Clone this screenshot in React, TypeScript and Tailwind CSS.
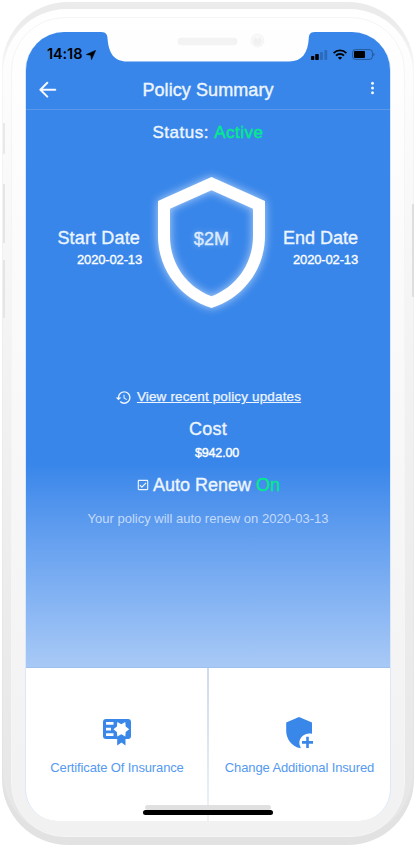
import { MdHistory, MdOutlineCheckBox } from "react-icons/md";

function StatusBar() {
    return (
        <div className="flex h-[42px] items-center justify-between pl-[21px] pr-[15px] pt-[3px] text-black">
            <div className="flex items-center gap-[3px]">
                <span className="w-[36px] whitespace-nowrap font-[Inter,sans-serif] text-[14.5px] font-semibold leading-none tracking-[-0.1px]">14:18</span>
                <svg width="10" height="10" viewBox="0 0 10 10" fill="currentColor" stroke="currentColor" strokeWidth="0.600" strokeLinejoin="round">
                    <path d="M9.600 0.400 5.500 9.600 4.800 5.200 0.400 4.500Z" />
                </svg>
            </div>
            <div className="flex items-center gap-[5px]">
                <svg width="17" height="10" viewBox="0 0 17 10" fill="currentColor">
                    <rect x="0" y="6" width="3.3" height="4" rx="0.8" />
                    <rect x="4.2" y="4" width="3.6" height="6" rx="0.8" />
                    <rect x="9" y="2" width="3" height="8" rx="0.8" opacity="0.2" />
                    <rect x="13.3" y="0" width="3" height="10" rx="0.8" opacity="0.2" />
                </svg>
                <svg width="14" height="11" viewBox="0 0 14 11" fill="none" stroke="currentColor" strokeWidth="1.8">
                    <path d="M0.6 4.1a9 9 0 0 1 12.8 0M3 6.7a5.6 5.6 0 0 1 8 0" />
                    <path d="M7 10.8 4.9 8.7a3 3 0 0 1 4.2 0Z" fill="currentColor" stroke="none" />
                </svg>
                <svg width="23" height="11" viewBox="0 0 23 11" fill="none">
                    <rect x="0.6" y="0.6" width="19.8" height="9.8" rx="2.8" stroke="currentColor" opacity="0.35" />
                    <rect x="2" y="2" width="11" height="7" rx="1" fill="currentColor" />
                    <path d="M21.5 3.8v3.4c1.2-.5 1.2-2.9 0-3.4Z" fill="currentColor" opacity="0.45" />
                </svg>
            </div>
        </div>
    )
}

function Notch() {
    return (
        <svg className="absolute left-[76px] top-[-2px]" width="212" height="33" viewBox="0 0 212 33">
            <path d="M0 0H212V2.2C208.5 2.2 207 4 206.800 8C206 23 200 31.500 187 31.500H25C12 31.500 6.500 23 5.500 8C5.200 4 3.500 2.200 0 2.200Z" fill="#fefefe" />
            <rect x="75.500" y="7.800" width="60" height="7.400" rx="3.700" fill="#f3f3f3" />
            <circle cx="155.500" cy="10.500" r="6.300" fill="#fafafa" stroke="#f3f3f3" />
            <circle cx="155.500" cy="11" r="4.500" fill="#f1f1f1" />
            <path d="M153 6.500h5l-2.500 3Z" fill="#fafafa" />
        </svg>
    )
}

function Header() {
    return (
        <header className="relative flex h-[36px] items-center justify-center border-b border-[#5b98e9] pb-[4px]">
            <svg className="absolute left-[12.500px] top-[7px]" width="18" height="18" viewBox="0 0 18 18" fill="none" stroke="#f5f9ff" strokeWidth="2" strokeLinecap="round" strokeLinejoin="round">
                <path d="M16.300 8.700H1.600M8.300 1.800 1.400 8.700l6.900 6.900" />
            </svg>
            <h1 className="text-[18px] tracking-[0.08px] leading-none [-webkit-text-stroke:0.4px]">Policy Summary</h1>
            <svg className="absolute left-[344px] top-[7px]" width="5" height="14" viewBox="0 0 5 14" fill="#f0f6ff">
                <circle cx="2.500" cy="2.300" r="1.500" />
                <circle cx="2.500" cy="7" r="1.500" />
                <circle cx="2.500" cy="11.700" r="1.500" />
            </svg>
        </header>
    )
}

function Coverage() {
    return (
        <section className="flex h-[131px] items-start">
            <div className="w-[116px] pt-[52px] text-right">
                <h2 className="pr-[2px] text-[18px] leading-[18px] tracking-[0.15px] [-webkit-text-stroke:0.35px]">Start Date</h2>
                <p className="pt-[6px] text-[13px] leading-[14px] tracking-[-0.15px] text-white [-webkit-text-stroke:0.35px]">2020-02-13</p>
            </div>
            <div className="relative ml-[15px] flex h-[131px] w-[109px] items-center justify-center">
                <svg className="absolute inset-0 overflow-visible drop-shadow-[0_0_5px_rgba(255,255,255,0.65)]" width="109" height="131" viewBox="0 0 109 131">
                    <path fill="#fff" fillRule="evenodd" d="M54.500 0 108 24V59C108 93 85 122 54.500 131C24 122 1 93 1 59V24ZM54.500 13.300 13 31.700V59C13 87 30 110 54.500 119.300C79 110 96 87 96 59V31.700Z" />
                </svg>
                <span className="pb-[7px] text-[18px] tracking-[0.1px] text-[#dcebff] [-webkit-text-stroke:0.4px] [text-shadow:0_0_6px_rgba(255,255,255,0.4)]">$2M</span>
            </div>
            <div className="ml-[16px] w-[77px] pt-[52px] text-right">
                <h2 className="pr-[1px] text-[18px] leading-[18px] [-webkit-text-stroke:0.35px]">End Date</h2>
                <p className="pr-[1px] pt-[6px] text-[13px] leading-[14px] tracking-[-0.15px] text-white [-webkit-text-stroke:0.35px]">2020-02-13</p>
            </div>
        </section>
    )
}

function CertificateIcon() {
    return (
        <svg width="28" height="27" viewBox="0 0 28 27">
            <path fill="#3987e8" d="M3 0H25a3 3 0 0 1 3 3V17a3 3 0 0 1-3 3h-2.500v6.500L18.500 23.500 14.200 26.500V20H3a3 3 0 0 1-3-3V3a3 3 0 0 1 3-3Z" />
            <path fill="#fff" d="M3 3h7.500v2.700H3ZM3 8.700h5v2.700H3ZM3 14.200h7.500v2.700H3Z" />
            <path fill="#fff" d="M14.300 3 18.300 5.200 22.300 3 22.700 7.500 26.200 10.200 22.700 12.900 22.300 17.400 18.300 15.200 14.300 17.400 13.900 12.900 10.400 10.200 13.900 7.500Z" />
        </svg>
    )
}

function ShieldPlusIcon() {
    return (
        <svg width="28" height="32" viewBox="0 0 28 32">
            <path fill="#3987e8" d="M13 0 26 5.600V16.800C19.500 15.300 14 19.500 13.400 25 13.200 27.200 13.800 29.200 15 30.500L13.500 31C6 29.500 0.200 22 0.200 14V5.600Z" />
            <path d="M21.500 19.800V31M16 25.400H27" stroke="#3987e8" strokeWidth="2.600" />
        </svg>
    )
}

export default function App() {
    return (
        <main className="h-[845px] w-[414px] overflow-hidden bg-white pl-[2px] pt-[2px] font-['Liberation_Sans',Arial,sans-serif]">
            <div className="relative h-[843px] w-[412px] rounded-[66px] bg-linear-to-b from-[#ebebeb] from-2% via-[#f6f6f6] via-8% to-[#e2e2e2] to-95% px-px pb-[8px] pt-[7px]">
                {/* side buttons */}
                <div className="absolute left-px top-[121px] h-[31px] w-[2px] bg-[#e9e9e9]" />
                <div className="absolute left-px top-[182px] h-[59px] w-[2px] bg-[#e5e5e5]" />
                <div className="absolute left-px top-[258px] h-[58px] w-[2px] bg-[#e5e5e5]" />
                <div className="absolute right-0 top-[202px] h-[93px] w-[2px] bg-[#dedede]" />

                <div className="h-full rounded-[64px] bg-linear-to-b from-white via-[#f2f2f2] via-45% to-[#e6e6e6] px-[8px] pt-[8px]">
                    <div className="h-full rounded-[54px] border border-[#f5f5f5] bg-linear-to-b from-white to-[#f1f1f1] px-[13px] pb-[14px] pt-[14px]">
                        <div className="relative flex h-[789px] w-[366px] flex-col rounded-t-[39px] rounded-b-[32px] border-x border-[#dbe8f8] bg-white">
                            <div className="flex h-[636px] flex-col rounded-t-[38px] border-b border-[#9dc0ef] bg-linear-to-b from-[#3886ea] from-68% to-[#a8c9f6] text-[#edf5ff]">
                                <StatusBar />
                                <Header />
                                <p className="flex h-[67px] justify-center pt-[13px] text-[17px] leading-[20px] tracking-[0.5px] [-webkit-text-stroke:0.4px]">
                                    Status:&nbsp;<span className="text-[#00ed8a]">Active</span>
                                </p>
                                <Coverage />
                                <div className="mt-[80px] flex h-[18px] items-center justify-center">
                                    <MdHistory className="mr-[5px] size-[17px]" />
                                    <a className="text-[13.5px] leading-[18px] tracking-[0.15px] underline underline-offset-1 [-webkit-text-stroke:0.25px]" href="#">View recent policy updates</a>
                                </div>
                                <h2 className="pt-[13px] text-center text-[18px] leading-[20px] tracking-[0.3px] [-webkit-text-stroke:0.35px]">Cost</h2>
                                <p className="pl-[18px] pt-[7px] text-center text-[12.500px] leading-[15px] tracking-[-0.15px] text-white [-webkit-text-stroke:0.4px]">$942.00</p>
                                <div className="mt-[14px] flex h-[20px] items-center justify-center text-[18px] [-webkit-text-stroke:0.35px]">
                                    <MdOutlineCheckBox className="mr-[3px] size-[14px]" strokeWidth="0" />
                                    Auto Renew&nbsp;<span className="text-[#00ed8a]">On</span>
                                </div>
                                <p className="pt-[16px] text-center text-[13px] leading-[16px] text-[#c3dbfb]">Your policy will auto renew on 2020-03-13</p>
                            </div>
                            <nav className="flex flex-1 text-[13px] leading-[16px] tracking-[-0.13px] text-[#559af0]">
                                <button className="flex w-[181px] flex-col items-center pt-[51px]">
                                    <CertificateIcon />
                                    <span className="pl-px pt-[14px]">Certificate Of Insurance</span>
                                </button>
                                <div className="w-[2px] bg-linear-to-b from-[#cddbed] to-[#edf2f7]" />
                                <button className="flex w-[181px] flex-col items-center pt-[49px]">
                                    <ShieldPlusIcon />
                                    <span className="pt-[11px]">Change Additional Insured</span>
                                </button>
                            </nav>
                            <Notch />
                            <div className="absolute bottom-[11px] left-[119px] h-[5px] w-[126px] rounded-full bg-[#e0e0e0]" />
                            <div className="absolute bottom-[6px] left-[117px] h-[5px] w-[130px] rounded-full bg-black" />
                        </div>
                    </div>
                </div>
            </div>
        </main>
    )
}
